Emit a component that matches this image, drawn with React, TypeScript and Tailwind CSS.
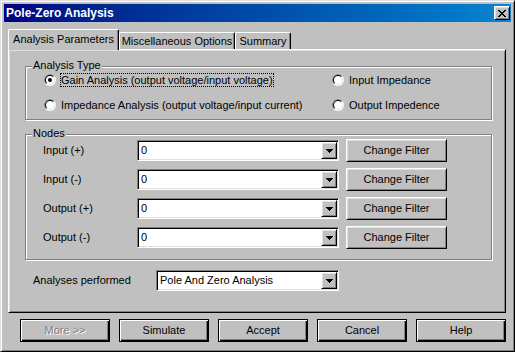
import React from 'react';

const raised = 'border border-t-white border-l-white border-r-black border-b-black shadow-[inset_1px_1px_0_#dfdfdf,inset_-1px_-1px_0_#808080]';
const sunken = 'border border-t-[#808080] border-l-[#808080] border-r-white border-b-white shadow-[inset_1px_1px_0_#000,inset_-1px_-1px_0_#dfdfdf]';
const etched = 'border border-[#808080] shadow-[inset_1px_1px_0_#fff,1px_1px_0_#fff]';
const dlgButton = 'border border-black shadow-[inset_1px_1px_0_#fff,inset_-1px_-1px_0_#000,inset_-2px_-2px_0_#808080] bg-[#c0c0c0] flex items-center justify-center';

const Radio: React.FC<{ checked?: boolean }> = ({ checked }) => (
  <svg width="12" height="12" viewBox="0 0 12 12" className="shrink-0">
    <circle cx="6" cy="6" r="6" fill="#fff" />
    <path d="M1.757 10.243A6 6 0 0 1 10.243 1.757Z" fill="#808080" />
    <circle cx="6" cy="6" r="5" fill="#dfdfdf" />
    <path d="M2.464 9.536A5 5 0 0 1 9.536 2.464Z" fill="#000" />
    <circle cx="6" cy="6" r="4" fill="#fff" />
    {checked && <circle cx="6" cy="6" r="2" fill="#000" />}
  </svg>
);

const Arrow = () => (
  <svg width="7" height="4" viewBox="0 0 7 4" shapeRendering="crispEdges">
    <path d="M0 0h7v1h-1v1h-1v1h-1v1h-1v-1h-1v-1h-1v-1h-1z" fill="#000" />
  </svg>
);

const Combo: React.FC<{ value: string; width: string }> = ({ value, width }) => (
  <div className={`${sunken} ${width} h-[21px] bg-white flex items-center p-[1px] shrink-0`}>
    <span className="flex-1 pl-[2px] leading-none">{value}</span>
    <div className={`${raised} bg-[#c0c0c0] w-4 h-[17px] flex items-center justify-center`}>
      <Arrow />
    </div>
  </div>
);

const Group: React.FC<{ label: string; className: string; children: React.ReactNode }> = ({ label, className, children }) => (
  <div className={`${etched} relative w-[467px] ${className}`}>
    <span className="absolute -top-[8px] left-[6px] px-[1px] bg-[#c0c0c0] leading-[13px]">{label}</span>
    {children}
  </div>
);

export default function App() {
  const nodes = ['Input (+)', 'Input (-)', 'Output (+)', 'Output (-)'];

  return (
    <div className="w-[515px] h-[352px] bg-[#c0c0c0] border border-t-[#dfdfdf] border-l-[#dfdfdf] border-r-black border-b-black shadow-[inset_1px_1px_0_#fff,inset_-1px_-1px_0_#808080] p-[3px] flex flex-col font-['Liberation_Sans',Arial,sans-serif] text-[11px] text-black select-none">
      {/* title bar */}
      <div className="h-[18px] bg-linear-to-r from-[#000080] to-[#1084d0] flex items-center pl-[2px] pr-[1px]">
        <span className="text-white font-bold text-[12px] leading-none">Pole-Zero Analysis</span>
        <div className={`${raised} bg-[#c0c0c0] ml-auto w-4 h-[14px] flex items-center justify-center`}>
          <svg width="8" height="7" viewBox="0 0 8 7" shapeRendering="crispEdges">
            <path d="M0 0h2v1h-2zM6 0h2v1h-2zM1 1h2v1h-2zM5 1h2v1h-2zM2 2h4v1h-4zM3 3h2v1h-2zM2 4h4v1h-4zM1 5h2v1h-2zM5 5h2v1h-2zM0 6h2v1h-2zM6 6h2v1h-2z" fill="#000" />
          </svg>
        </div>
      </div>

      {/* tabs */}
      <div className="mt-[7px] ml-[4px] h-[20px] flex items-end">
        <div className="relative z-10 w-[111px] h-[21px] -mb-[1px] bg-[#c0c0c0] border-t border-l border-r border-t-white border-l-white border-r-black rounded-t-[2px] shadow-[inset_-1px_0_0_#808080] flex items-center justify-center pb-[1px]">
          Analysis Parameters
        </div>
        <div className="w-[116px] h-[17px] border-t border-l border-r border-t-white border-l-white border-r-black rounded-t-[2px] shadow-[inset_-1px_0_0_#808080] flex items-center justify-center">
          Miscellaneous Options
        </div>
        <div className="w-[56px] h-[17px] border-t border-l border-r border-t-white border-l-white border-r-black rounded-t-[2px] shadow-[inset_-1px_0_0_#808080] flex items-center justify-center">
          Summary
        </div>
      </div>

      {/* tab panel */}
      <div className={`${raised} ml-[4px] w-[498px] h-[264px] pt-[16px] pl-[16px] flex flex-col`}>
        <Group label="Analysis Type" className="h-[54px] pt-[3px] flex flex-col gap-[5px]">
          <div className="h-[20px] flex items-center pl-[18px]">
            <div className="w-[288px] flex items-center">
              <Radio checked />
              <span className="ml-[4px] border border-dotted border-black h-[14px] flex items-center">Gain Analysis (output voltage/input voltage)</span>
            </div>
            <div className="flex items-center">
              <Radio />
              <span className="ml-[4px] border border-transparent">Input Impedance</span>
            </div>
          </div>
          <div className="h-[20px] flex items-center pl-[18px]">
            <div className="w-[288px] flex items-center">
              <Radio />
              <span className="ml-[4px] border border-transparent">Impedance Analysis (output voltage/input current)</span>
            </div>
            <div className="flex items-center">
              <Radio />
              <span className="ml-[4px] border border-transparent">Output Impedence</span>
            </div>
          </div>
        </Group>

        <Group label="Nodes" className="mt-[14px] h-[126px] pt-[4px] flex flex-col gap-[6px]">
          {nodes.map(n => (
            <div key={n} className="h-[23px] flex items-center pl-[17px]">
              <span className="w-[94px]">{n}</span>
              <Combo value="0" width="w-[202px]" />
              <div className={`${raised} bg-[#c0c0c0] ml-[7px] w-[101px] h-[23px] flex items-center justify-center`}>Change Filter</div>
            </div>
          ))}
        </Group>

        <div className="mt-[10px] ml-[8px] h-[21px] flex items-center">
          <span className="w-[123px]">Analyses performed</span>
          <Combo value="Pole And Zero Analysis" width="w-[183px]" />
        </div>
      </div>

      {/* dialog buttons */}
      <div className="mt-[6px] ml-[16px] flex gap-[9px]">
        <div className={`${dlgButton} w-[90px] h-[23px] text-[#808080] [text-shadow:1px_1px_0_#fff]`}>More &gt;&gt;</div>
        {['Simulate', 'Accept', 'Cancel', 'Help'].map(b => (
          <div key={b} className={`${dlgButton} w-[90px] h-[23px]`}>{b}</div>
        ))}
      </div>
    </div>
  );
}
